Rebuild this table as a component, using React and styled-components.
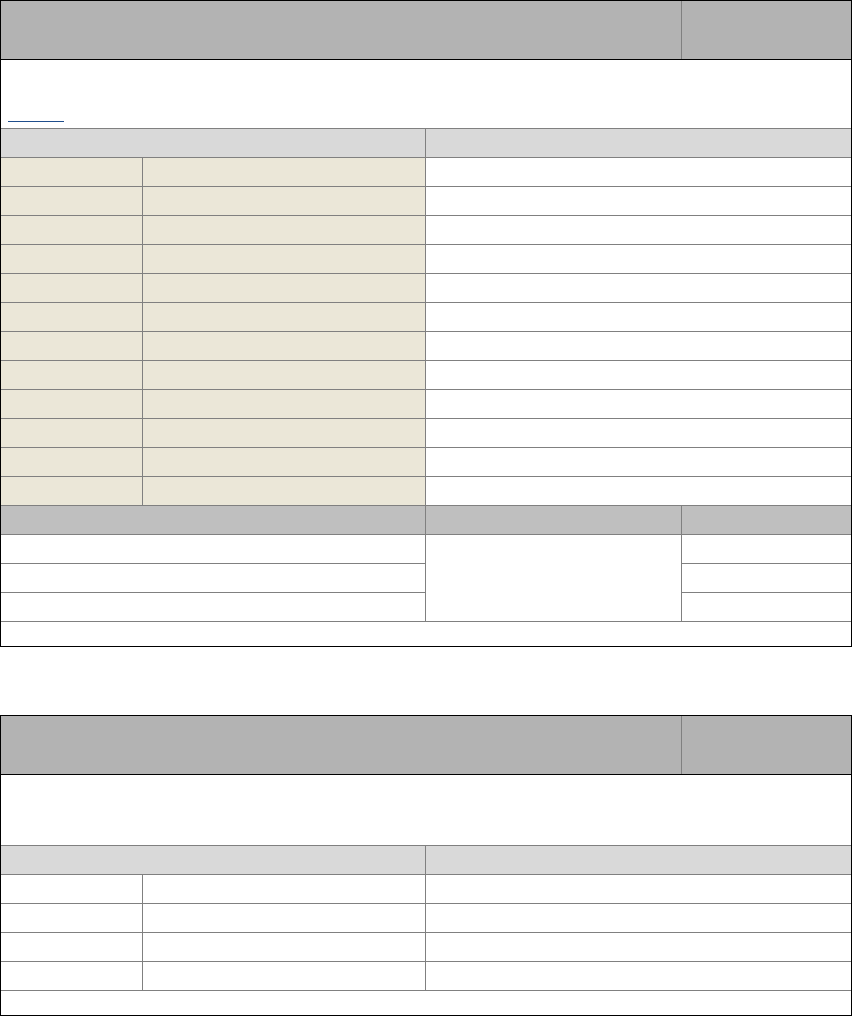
import styled, { createGlobalStyle } from "styled-components";

const GlobalStyle = createGlobalStyle`
  html, body {
    margin: 0;
    padding: 0;
    background: #fff;
    font-family: "Liberation Sans", Arial, sans-serif;
    font-size: 13px;
  }
`;

const LINE = "#808080";

const Page = styled.div`
  width: 852px;
  display: flex;
  flex-direction: column;
  gap: 68px;
`;

const Sheet = styled.section`
  width: 852px;
  box-sizing: border-box;
  border: 1px solid #000;
  background: #fff;
`;

const Title = styled.header`
  display: grid;
  grid-template-columns: 681px 1fr;
  height: 59px;
  box-sizing: border-box;
  border-bottom: 1px solid #000;
  background: #b3b3b3;
`;

const TitleCell = styled.div`
  box-sizing: border-box;
  border-right: ${({ $last }) => ($last ? "none" : `1px solid ${LINE}`)};
`;

const Description = styled.div`
  display: flex;
  align-items: flex-end;
  height: ${({ $h }) => $h}px;
  box-sizing: border-box;
  padding: 0 0 6px 7px;
  border-bottom: 1px solid ${LINE};
`;

const LinkLine = styled.a`
  display: block;
  width: 56px;
  height: 0;
  border-bottom: 1px solid #1f4e8c;
`;

const Grid = styled.div`
  display: grid;
  grid-template-columns: ${({ $cols }) => $cols};
  grid-auto-rows: 29px;
`;

const tones = {
  head: "#d9d9d9",
  group: "#bfbfbf",
  beige: "#ebe7d8",
  plain: "#fff",
};

const Cell = styled.div`
  box-sizing: border-box;
  background: ${({ $tone }) => tones[$tone || "plain"]};
  border-bottom: 1px solid ${LINE};
  border-right: ${({ $last }) => ($last ? "none" : `1px solid ${LINE}`)};
  grid-column: ${({ $span }) => ($span ? `span ${$span}` : "auto")};
  grid-row: ${({ $rows }) => ($rows ? `span ${$rows}` : "auto")};
`;

const Footer = styled.div`
  height: 24px;
`;

function DataRows({ count, tone }) {
  return Array.from({ length: count }).map((_, i) => [
    <Cell key={`a${i}`} $tone={tone} />,
    <Cell key={`b${i}`} $tone={tone} />,
    <Cell key={`c${i}`} $last />,
  ]);
}

export default function App() {
  return (
    <>
      <GlobalStyle />
      <Page>
        <Sheet>
          <Title>
            <TitleCell />
            <TitleCell $last />
          </Title>
          <Description $h={69}>
            <LinkLine href="#" aria-label="link" />
          </Description>
          <Grid $cols="142px 283px 1fr">
            <Cell $tone="head" $span={2} />
            <Cell $tone="head" $last />
            <DataRows count={12} tone="beige" />
          </Grid>
          <Grid $cols="425px 256px 1fr">
            <Cell $tone="group" />
            <Cell $tone="group" />
            <Cell $tone="group" $last />
            <Cell />
            <Cell $rows={3} />
            <Cell $last />
            <Cell />
            <Cell $last />
            <Cell />
            <Cell $last />
          </Grid>
          <Footer />
        </Sheet>

        <Sheet>
          <Title>
            <TitleCell />
            <TitleCell $last />
          </Title>
          <Description $h={71} />
          <Grid $cols="142px 283px 1fr">
            <Cell $tone="head" $span={2} />
            <Cell $tone="head" $last />
            <DataRows count={4} tone="plain" />
          </Grid>
          <Footer />
        </Sheet>
      </Page>
    </>
  );
}
